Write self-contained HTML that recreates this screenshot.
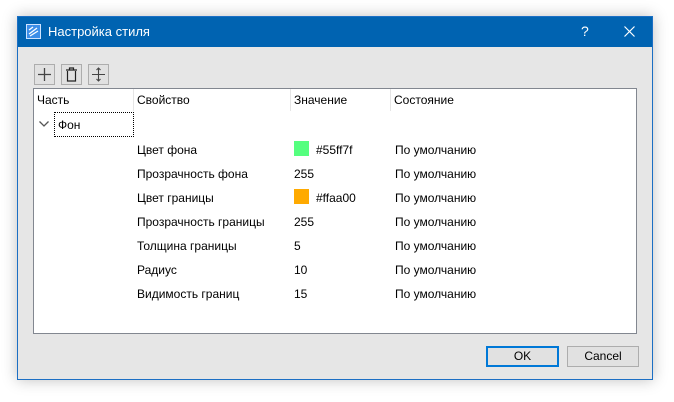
<!DOCTYPE html>
<html><head><meta charset="utf-8"><style>
body{margin:0;width:674px;height:402px;background:#fff;position:relative;overflow:hidden;font-family:"Liberation Sans",sans-serif;font-size:12px;color:#000}
.win{position:absolute;left:17px;top:16px;width:634px;height:362px;background:#e6e6e6;border:1px solid #1c6fc4;box-shadow:0 0 14px rgba(0,0,0,.25)}
.title{position:absolute;left:0;top:0;width:634px;height:30px;background:#0063b1;color:#fff;font-size:13px}
.abs{position:absolute}
.tb{position:absolute;top:47px;width:19px;height:19px;border:1px solid #adadad;background:#e1e1e1}
.box{position:absolute;left:15px;top:71px;width:602px;height:244px;background:#fff;border:1px solid #828790}
.hd{position:absolute;top:0;height:22px;border-right:1px solid #e5e5e5;line-height:22px;padding-left:3px}
.r{position:absolute;line-height:24px;top:49px}
.btn{position:absolute;top:329px;width:70px;height:19px;border:1px solid #adadad;background:#e1e1e1;text-align:center;line-height:19px}
</style></head><body>
<div class="win">
 <div class="title">
  <svg class="abs" style="left:8px;top:7px" width="15" height="15" viewBox="0 0 15 15"><rect x="0.5" y="0.5" width="14" height="14" fill="#3c8ee8" stroke="#cfe4ff"/><path d="M3 10 L11 4 M4 12 L12 7 M3 6 L7 3" stroke="#fff" stroke-width="1.3"/></svg>
  <div class="abs" style="left:30px;top:7px">Настройка стиля</div>
  <div class="abs" style="left:563px;top:6px;font-size:14px">?</div>
  <svg class="abs" style="left:606px;top:9px" width="11" height="11"><path d="M0.5 0.5L10.5 10.5M10.5 0.5L0.5 10.5" stroke="#fff" stroke-width="1.2"/></svg>
 </div>
 <div class="tb" style="left:16px"><svg width="19" height="19"><path d="M9.5 3V16M3 9.5H16" stroke="#444" stroke-width="1.3"/></svg></div>
 <div class="tb" style="left:43px"><svg width="19" height="19"><path d="M4 5H15M7.5 4.5V3H11.5V4.5M5.5 6V16H13.5V6" fill="none" stroke="#222" stroke-width="1.2"/></svg></div>
 <div class="tb" style="left:70px"><svg width="19" height="19"><path d="M3 9.5H16M9.5 3V16M7.5 5L9.5 3L11.5 5M7.5 14L9.5 16L11.5 14" fill="none" stroke="#444" stroke-width="1.1"/></svg></div>
 <div class="box">
  <div class="hd" style="left:0;width:96px">Часть</div>
  <div class="hd" style="left:100px;width:153px">Свойство</div>
  <div class="hd" style="left:257px;width:96px">Значение</div>
  <div class="hd" style="left:357px;width:200px;border:none">Состояние</div>
  <svg class="abs" style="left:5px;top:32px" width="10" height="6"><path d="M0.5 0.5L5 5L9.5 0.5" fill="none" stroke="#555" stroke-width="1.3"/></svg>
  <div class="abs" style="left:20px;top:23px;width:80px;height:25px;border:1px dotted #000;line-height:24px;padding-left:3px;box-sizing:border-box">Фон</div>
  <div class="r" style="left:103px">Цвет фона<br>Прозрачность фона<br>Цвет границы<br>Прозрачность границы<br>Толщина границы<br>Радиус<br>Видимость границ</div>
  <div class="abs" style="left:260px;top:52px;width:15px;height:15px;background:#55ff7f"></div>
  <div class="abs" style="left:260px;top:100px;width:15px;height:15px;background:#ffaa00"></div>
  <div class="r" style="left:260px">&nbsp;<br>255<br>&nbsp;<br>255<br>5<br>10<br>15</div>
  <div class="r" style="left:282px">#55ff7f</div>
  <div class="r" style="left:282px;top:97px">#ffaa00</div>
  <div class="r" style="left:361px">По умолчанию<br>По умолчанию<br>По умолчанию<br>По умолчанию<br>По умолчанию<br>По умолчанию<br>По умолчанию</div>
 </div>
 <div class="btn" style="left:468px;border:2px solid #0078d7;width:69px;height:17px;line-height:17px">OK</div>
 <div class="btn" style="left:549px">Cancel</div>
</div>
</body></html>
